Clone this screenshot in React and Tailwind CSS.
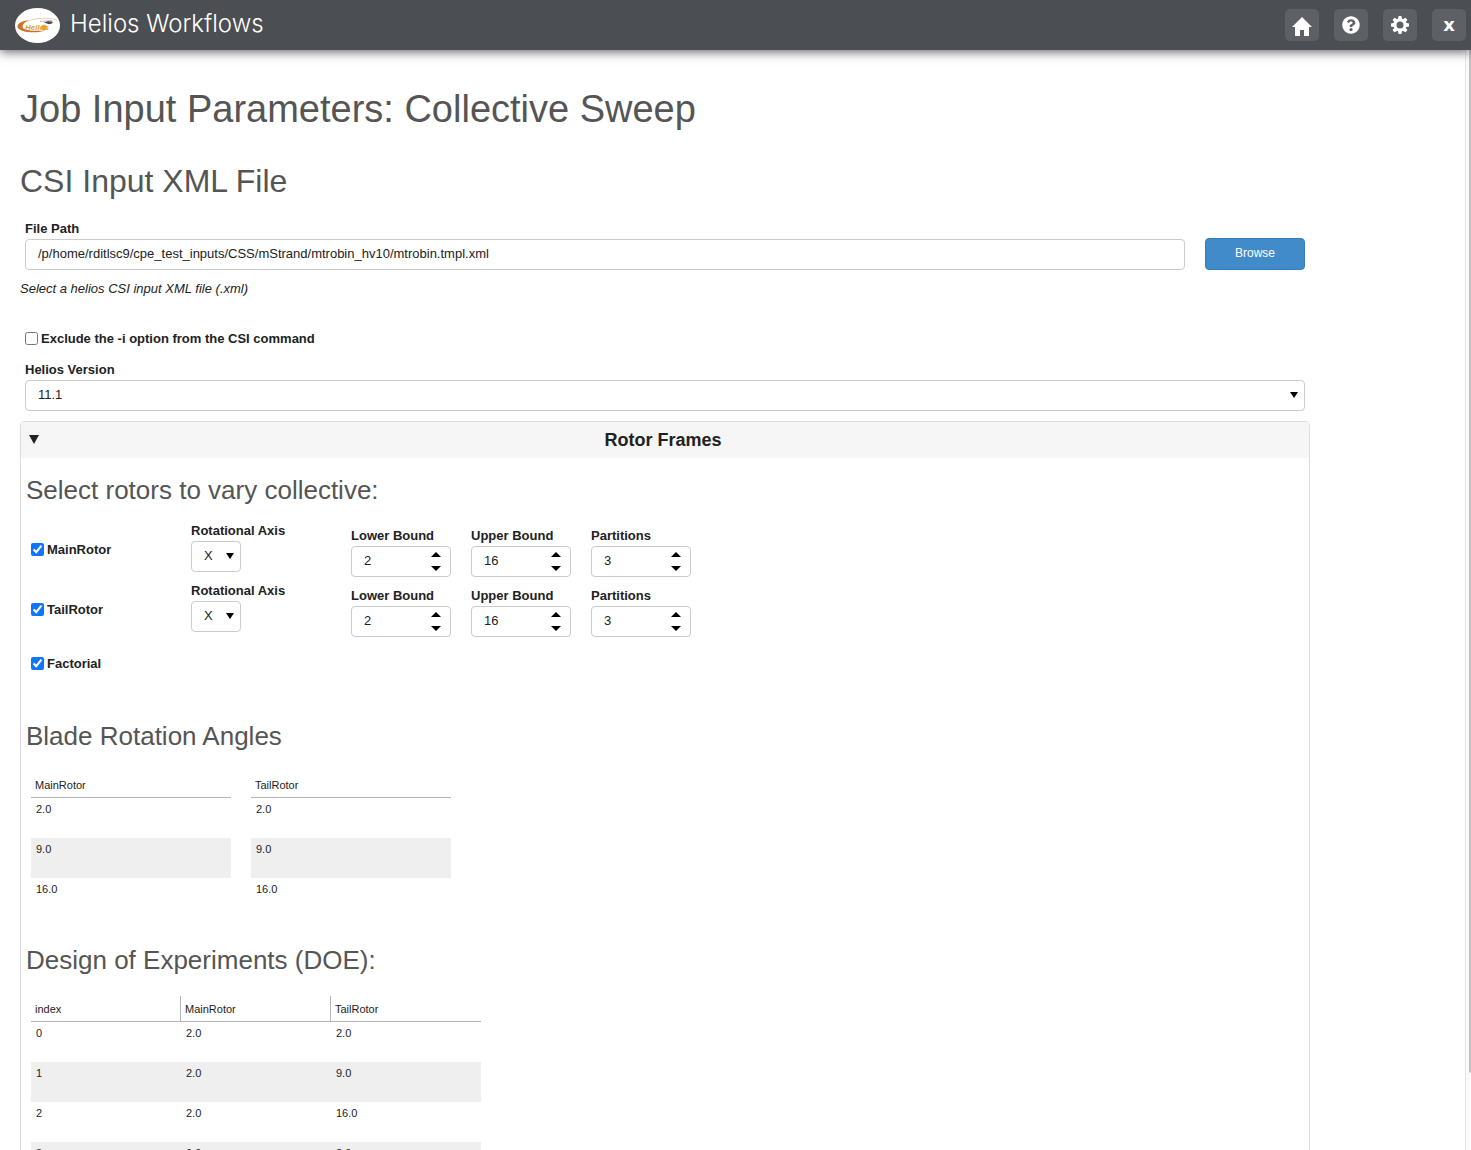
import { useState } from "react";
import { FaQuestionCircle } from "react-icons/fa";

const ROTORS = ["MainRotor", "TailRotor"];
const ANGLES = ["2.0", "9.0", "16.0"];
const VISIBLE_DOE_ROWS = 4;
const DOE_ROWS = ANGLES.flatMap((main) => ANGLES.map((tail) => [main, tail]))
  .map((pair, index) => [String(index), ...pair])
  .slice(0, VISIBLE_DOE_ROWS);
const GEAR_TEETH = [0, 45, 90, 135, 180, 225, 270, 315];

function HeliosLogo() {
  return (
    <svg viewBox="0 0 45 35" className="h-[35px] w-[45px] shrink-0" role="img" aria-label="Helios">
      <ellipse cx="22.5" cy="17.5" rx="22.5" ry="17.5" fill="#fff" />
      <path d="M14 12C7 13 2 15.500 2.500 19C3.500 23.500 17 26.500 31 22.500C19 23.500 8 22.500 7.500 19C7.500 16 10 14 14 12Z" fill="#cf7028" />
      <path d="M12 13.500C20 10 31 9 42 12" fill="none" stroke="#ecc0a0" strokeWidth="0.800" />
      <circle cx="29" cy="19.500" r="2.800" fill="#f6a21c" />
      <text x="10" y="21.500" fontSize="8" fontWeight="700" fontStyle="italic" fill="#d8a43c">
        Helios
      </text>
      <path d="M29 14.500l4-1.500 5 .800-1 1.700-3 .700z" fill="#4b4b55" />
      <path d="M25 13.500l12-1" stroke="#9a9aa2" strokeWidth="0.700" />
    </svg>
  );
}

function HomeIcon() {
  return (
    <svg viewBox="0 0 20 19" className="mt-0.5 h-[19px] w-5" aria-hidden="true" fill="currentColor">
      <path d="M10 0L20 10H17V19H12V13H8V19H3V10H0Z" />
    </svg>
  );
}

function GearIcon() {
  return (
    <svg viewBox="-9 -9 18 18" className="size-[18px]" aria-hidden="true" fill="currentColor">
      <circle r="5" fill="none" stroke="currentColor" strokeWidth="3" />
      {GEAR_TEETH.map((angle) => (
        <path key={angle} d="M-2.200 -5.500L-1.400 -9H1.400L2.200 -5.500Z" transform={`rotate(${angle})`} />
      ))}
    </svg>
  );
}

function HeaderButton({ label, children }) {
  return (
    <button
      type="button"
      aria-label={label}
      className="flex h-8 w-[34px] items-center justify-center rounded-[5px] bg-[#5d6065] text-white"
    >
      {children}
    </button>
  );
}

function Triangle({ up = false, className }) {
  return (
    <svg viewBox="0 0 10 6" preserveAspectRatio="none" className={className} aria-hidden="true">
      <path d={up ? "M0 6L5 0L10 6Z" : "M0 0L5 6L10 0Z"} fill="currentColor" />
    </svg>
  );
}

function FieldLabel({ htmlFor, children }) {
  return (
    <label htmlFor={htmlFor} className="block whitespace-nowrap font-bold leading-5">
      {children}
    </label>
  );
}

function SelectField({ id, label, value, compact = false }) {
  return (
    <div>
      <FieldLabel htmlFor={id}>{label}</FieldLabel>
      <div className={compact ? "relative w-[50px]" : "relative"}>
        <select
          id={id}
          defaultValue={value}
          className="block h-[31px] w-full appearance-none rounded border border-[#ccc] bg-white px-3 pb-0.5 text-[#222] opacity-100"
        >
          <option>{value}</option>
        </select>
        <Triangle className="pointer-events-none absolute top-3 right-[7px] h-1.5 w-2 text-black" />
      </div>
    </div>
  );
}

function NumberField({ id, label, initial }) {
  const [value, setValue] = useState(initial);
  return (
    <div className="w-[100px]">
      <FieldLabel htmlFor={id}>{label}</FieldLabel>
      <div className="flex h-[31px] rounded border border-[#ccc] bg-white">
        <input
          id={id}
          type="text"
          inputMode="numeric"
          value={value}
          onChange={(e) => setValue(e.target.value)}
          className="w-0 flex-1 bg-transparent pb-0.5 pl-3 outline-none"
        />
        <div className="flex w-7 flex-col items-center justify-between py-[5px] text-black">
          <button type="button" aria-label={`Increase ${label}`} onClick={() => setValue(Number(value) + 1)}>
            <Triangle up className="block h-[5px] w-2.5" />
          </button>
          <button type="button" aria-label={`Decrease ${label}`} onClick={() => setValue(Number(value) - 1)}>
            <Triangle className="block h-[5px] w-2.5" />
          </button>
        </div>
      </div>
    </div>
  );
}

function CheckField({ children, checked = false }) {
  return (
    <label className="flex items-center gap-[3px] font-bold leading-5">
      <input type="checkbox" defaultChecked={checked} className="mb-px size-[13px] accent-[#0d75ff]" />
      {children}
    </label>
  );
}

function DataTable({ columns, rows, className }) {
  return (
    <table className={className}>
      <thead>
        <tr className="h-[26px]">
          {columns.map((name) => (
            <th
              key={name}
              className="border-r border-b border-[#b4b4b4] px-1 text-left font-normal last:border-r-0"
            >
              {name}
            </th>
          ))}
        </tr>
      </thead>
      <tbody>
        {rows.map((row) => (
          <tr key={row[0]} className="h-10 even:bg-[#efefef]">
            {row.map((cell, i) => (
              <td key={i} className="px-[5px] pt-[3px] align-top">
                {cell}
              </td>
            ))}
          </tr>
        ))}
      </tbody>
    </table>
  );
}

function SectionTitle({ children }) {
  return <h3 className="text-[26px] leading-8 text-[#555]">{children}</h3>;
}

export default function App() {
  return (
    <div className="flex h-screen flex-col bg-white font-['Liberation_Sans',Arial,sans-serif] text-[13px] text-[#222]">
      <header className="z-10 flex h-[50px] shrink-0 items-center bg-[#4b4e52] pr-[5px] pl-[15px] shadow-[0_2px_10px_rgba(0,0,0,0.6)]">
        <HeliosLogo />
        <span className="mb-0.5 ml-2.5 font-['Inter','Roboto',sans-serif] text-2xl leading-8 font-light text-white">
          Helios Workflows
        </span>
        <nav className="ml-auto flex items-center gap-[15px]">
          <HeaderButton label="Home"><HomeIcon /></HeaderButton>
          <HeaderButton label="Help"><FaQuestionCircle size={18} /></HeaderButton>
          <HeaderButton label="Settings"><GearIcon /></HeaderButton>
          <HeaderButton label="Close">
            <span className="font-['DejaVu_Sans',sans-serif] text-lg leading-5 font-bold">x</span>
          </HeaderButton>
        </nav>
      </header>

      <div className="flex min-h-0 flex-1">
        <main className="flex-1 overflow-y-auto px-5 [scrollbar-width:none]">
          <div className="max-w-[1290px]">
            <h1 className="pt-[35px] text-[38px] leading-[48px] text-[#555]">
              Job Input Parameters: Collective Sweep
            </h1>
            <h2 className="mt-7 text-[32px] leading-10 text-[#555]">CSI Input XML File</h2>

            <div className="mt-[18px] px-[5px]">
              <FieldLabel htmlFor="file-path">File Path</FieldLabel>
              <div className="-mt-px flex items-end gap-5">
                <input
                  id="file-path"
                  type="text"
                  defaultValue="/p/home/rditlsc9/cpe_test_inputs/CSS/mStrand/mtrobin_hv10/mtrobin.tmpl.xml"
                  className="h-[31px] min-w-0 flex-1 rounded border border-[#ccc] px-3 pb-0.5"
                />
                <button
                  type="button"
                  className="h-8 w-[100px] rounded border border-[#357ebd] bg-[#428bca] pb-0.5 text-xs text-white"
                >
                  Browse
                </button>
              </div>
            </div>
            <p className="mt-[9px] leading-5 italic">Select a helios CSI input XML file (.xml)</p>

            <div className="mt-[30px] px-[5px]">
              <CheckField>Exclude the -i option from the CSI command</CheckField>
              <div className="mt-[11px]">
                <SelectField id="helios-version" label="Helios Version" value="11.1" />
              </div>
            </div>

            <section className="mt-2.5 rounded-t-sm border border-[#ddd]">
              <header className="flex h-9 items-center bg-[#f6f6f6] px-2 text-[#222]">
                <button type="button" aria-label="Collapse Rotor Frames" className="pb-0.5">
                  <Triangle className="block h-[9px] w-2.5" />
                </button>
                <h3 className="flex-1 pr-3.5 text-center text-lg leading-6 font-bold">Rotor Frames</h3>
              </header>
              <div className="px-[5px] pt-4 pb-2">
                <SectionTitle>Select rotors to vary collective:</SectionTitle>
                <div className="mt-[15px] px-[5px]">
                  {ROTORS.map((rotor) => (
                    <div key={rotor} className="grid h-[60px] grid-cols-[140px_140px_100px_100px_100px] gap-5">
                      <div className="pt-[19px]">
                        <CheckField checked>{rotor}</CheckField>
                      </div>
                      <SelectField id={`${rotor}-axis`} label="Rotational Axis" value="X" compact />
                      <div className="pt-[5px]">
                        <NumberField id={`${rotor}-lower`} label="Lower Bound" initial={2} />
                      </div>
                      <div className="pt-[5px]">
                        <NumberField id={`${rotor}-upper`} label="Upper Bound" initial={16} />
                      </div>
                      <div className="pt-[5px]">
                        <NumberField id={`${rotor}-partitions`} label="Partitions" initial={3} />
                      </div>
                    </div>
                  ))}
                  <div className="mt-[13px]">
                    <CheckField checked>Factorial</CheckField>
                  </div>
                </div>

                <div className="mt-[46px]">
                  <SectionTitle>Blade Rotation Angles</SectionTitle>
                </div>
                <div className="mt-5 flex gap-5 px-[5px] text-[11px] leading-4">
                  {ROTORS.map((rotor) => (
                    <DataTable
                      key={rotor}
                      columns={[rotor]}
                      rows={ANGLES.map((angle) => [angle])}
                      className="w-[200px] table-fixed border-separate border-spacing-0"
                    />
                  ))}
                </div>

                <div className="mt-[26px]">
                  <SectionTitle>Design of Experiments (DOE):</SectionTitle>
                </div>
                <div className="mt-5 px-[5px] text-[11px] leading-4">
                  <DataTable
                    columns={["index", ...ROTORS]}
                    rows={DOE_ROWS}
                    className="w-[450px] table-fixed border-separate border-spacing-0"
                  />
                </div>
              </div>
            </section>
          </div>
        </main>
        <div className="flex w-1.5 justify-end border-l border-[#e4e4e4] bg-[#fafafa]" aria-hidden="true">
          <div className="h-[93%] w-0.5 rounded-bl-sm bg-[#c1c1c1]" />
        </div>
      </div>
    </div>
  );
}
